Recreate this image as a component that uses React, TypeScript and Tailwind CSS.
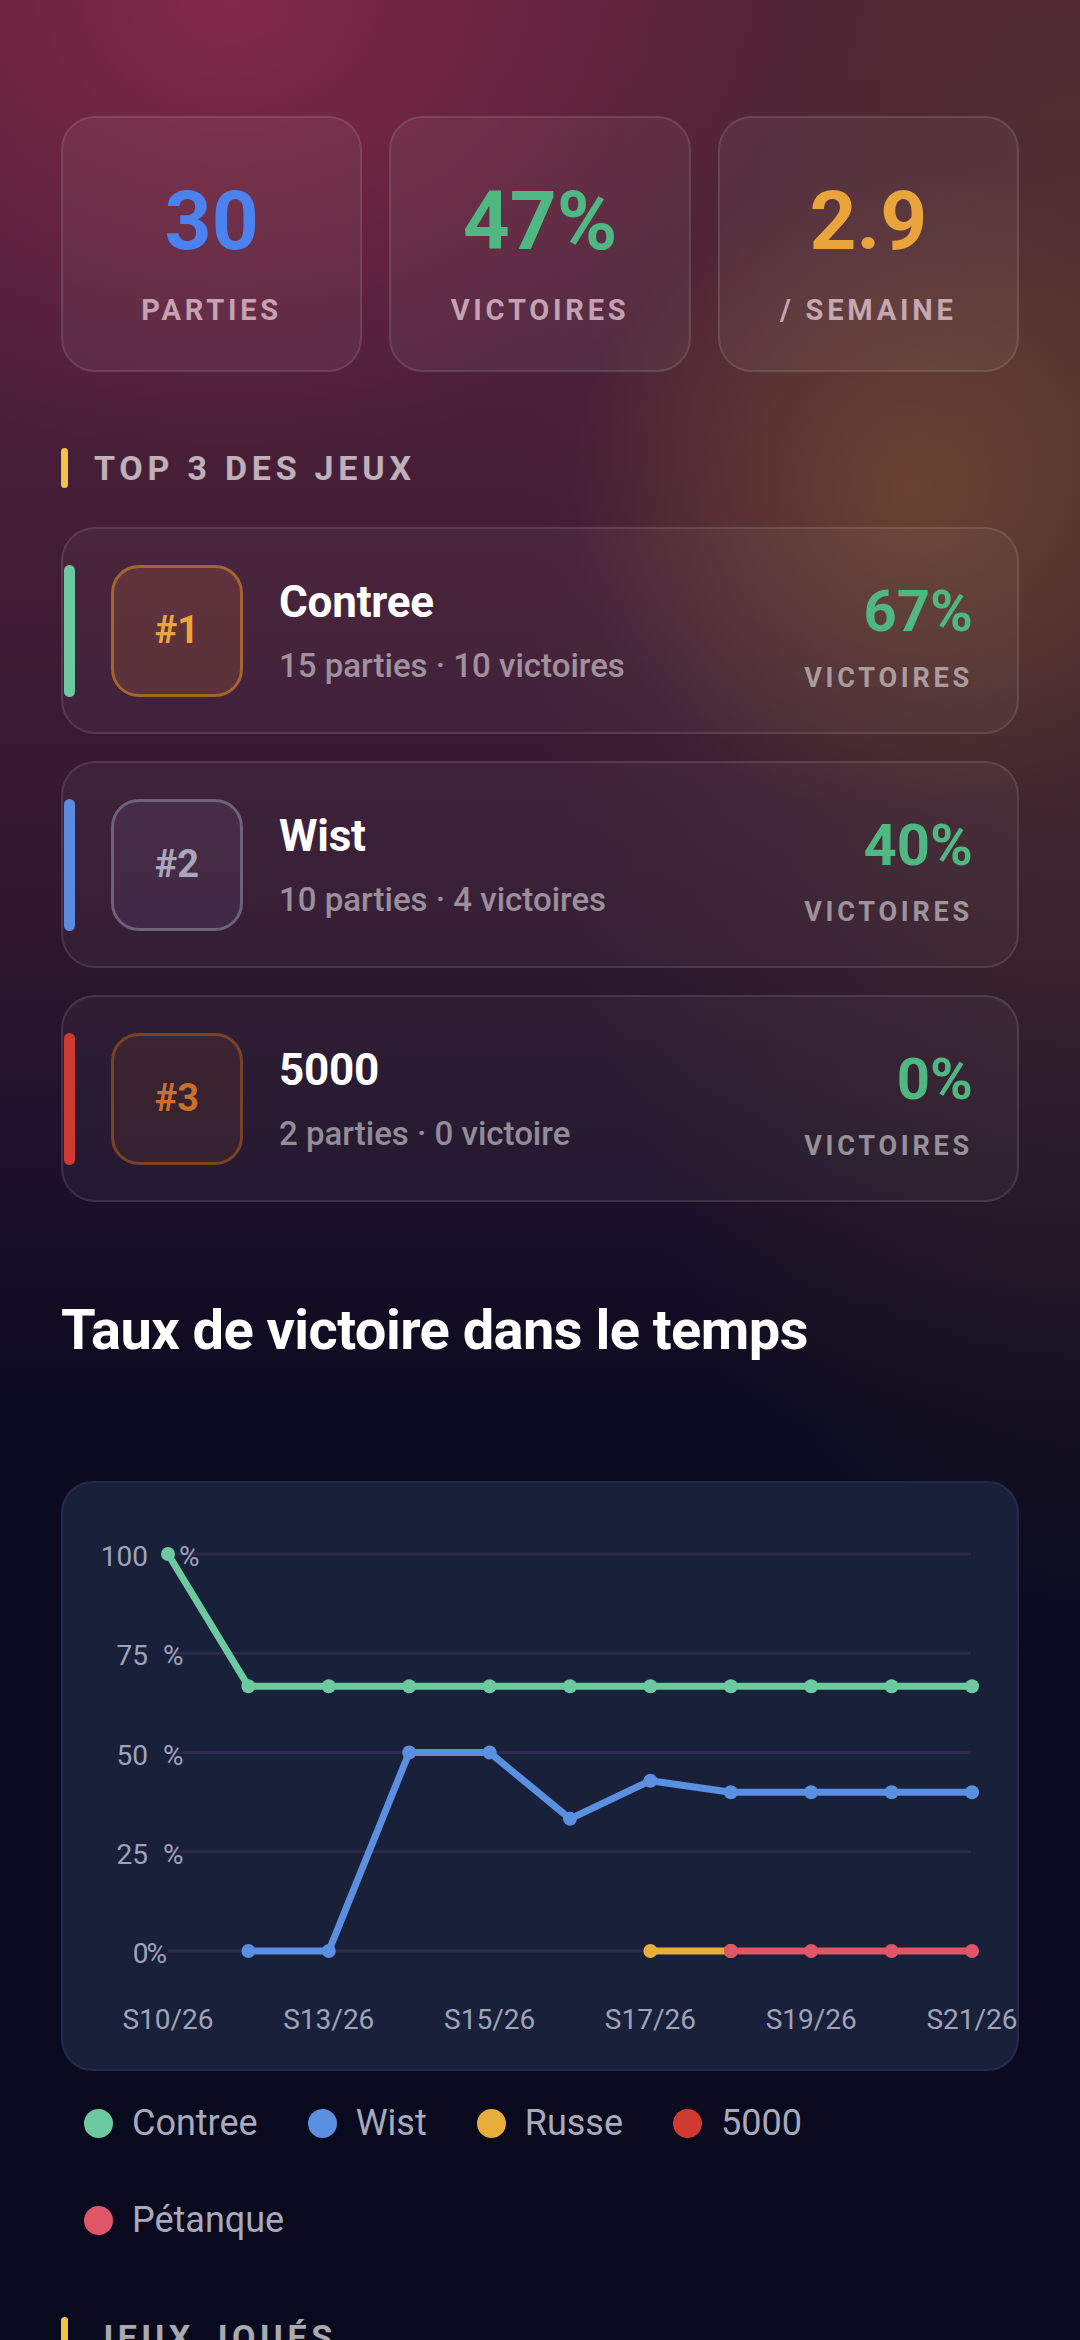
import React from "react";

const stats = [
  { value: "30", label: "PARTIES", color: "text-[#4b82f0]" },
  { value: "47%", label: "VICTOIRES", color: "text-[#4fb882]" },
  { value: "2.9", label: "/ SEMAINE", color: "text-[#e9a53b]" },
];

const top3 = [
  {
    rank: "#1",
    name: "Contree",
    sub: "15 parties · 10 victoires",
    pct: "67%",
    bar: "bg-[#6cc9a0]",
    box: "border-[#a3642f] bg-[#e8903a]/15 text-[#eca53a]",
  },
  {
    rank: "#2",
    name: "Wist",
    sub: "10 parties · 4 victoires",
    pct: "40%",
    bar: "bg-[#5b8be0]",
    box: "border-[#6f6179] bg-[#9a8cc0]/10 text-[#a6a6bd]",
  },
  {
    rank: "#3",
    name: "5000",
    sub: "2 parties · 0 victoire",
    pct: "0%",
    bar: "bg-[#d03a30]",
    box: "border-[#7a4224] bg-[#c0602a]/10 text-[#c8702c]",
  },
];

// chart geometry (relative to the chart card)
const X0 = 107;
const DX = 80.4;
const yOf = (v: number) => 470 - 3.97 * v;
const xOf = (i: number) => X0 + DX * i;

type Serie = { name: string; color: string; pts: [number, number][] };

const series: Serie[] = [
  {
    name: "Wist",
    color: "#5b8fe0",
    pts: [[1, 0], [2, 0], [3, 50], [4, 50], [5, 33.3], [6, 42.9], [7, 40], [8, 40], [9, 40], [10, 40]],
  },
  {
    name: "Contree",
    color: "#6cc9a0",
    pts: [[0, 100], [1, 66.7], [2, 66.7], [3, 66.7], [4, 66.7], [5, 66.7], [6, 66.7], [7, 66.7], [8, 66.7], [9, 66.7], [10, 66.7]],
  },
  { name: "Russe", color: "#e8ad3a", pts: [[6, 0], [7, 0]] },
  { name: "Pétanque", color: "#e05568", pts: [[7, 0], [8, 0], [9, 0], [10, 0]] },
];

const legend = [
  { name: "Contree", color: "bg-[#6cc9a0]" },
  { name: "Wist", color: "bg-[#5b8fe0]" },
  { name: "Russe", color: "bg-[#e8ad3a]" },
  { name: "5000", color: "bg-[#d03a30]" },
  { name: "Pétanque", color: "bg-[#e05568]" },
];

const xLabels = ["S10/26", "S13/26", "S15/26", "S17/26", "S19/26", "S21/26"];

function SectionTitle({ children }: { children: React.ReactNode }) {
  return (
    <div className="flex items-center gap-[26px]">
      <div className="w-[7px] h-[40px] rounded-full bg-[#f2c24a]" />
      <h3 className="text-[34px] leading-[40px] font-bold tracking-[0.14em] text-white/65">{children}</h3>
    </div>
  );
}

function Chart() {
  return (
    <div className="h-[590px] rounded-[32px] border-2 border-[#262a4a] bg-[#18203a] overflow-hidden">
      <svg width="958" height="590" viewBox="0 0 958 590" className="block -m-[2px]">
        {[100, 75, 50, 25, 0].map((v) => (
          <line key={v} x1={X0} x2={910} y1={yOf(v)} y2={yOf(v)} stroke="#2b2a4c" strokeWidth="3" />
        ))}
        <g fill="#a0a3b8" fontSize="28" fontFamily="Roboto, sans-serif">
          <text x="87" y={yOf(100) + 12} textAnchor="end">100</text>
          <text x="118" y={yOf(100) + 12}>%</text>
          {[75, 50, 25].map((v) => (
            <React.Fragment key={v}>
              <text x="87" y={yOf(v) + 12} textAnchor="end">{v}</text>
              <text x="102" y={yOf(v) + 12}>%</text>
            </React.Fragment>
          ))}
          <text x="104" y={yOf(0) + 12} textAnchor="end" letterSpacing="-2">0%</text>
          {xLabels.map((l, k) => (
            <text key={l} x={xOf(k * 2)} y="548" textAnchor="middle">{l}</text>
          ))}
        </g>
        {series.map((s) => (
          <g key={s.name}>
            <polyline
              points={s.pts.map(([i, v]) => `${xOf(i)},${yOf(v)}`).join(" ")}
              fill="none"
              stroke={s.color}
              strokeWidth="7"
              strokeLinejoin="round"
            />
            {s.pts.map(([i, v]) => (
              <circle key={i} cx={xOf(i)} cy={yOf(v)} r="7" fill={s.color} />
            ))}
          </g>
        ))}
      </svg>
    </div>
  );
}

export default function App() {
  return (
    <div
      className="min-h-screen w-full font-['Roboto',sans-serif] bg-[#0a0a1e] bg-[radial-gradient(ellipse_560px_460px_at_230px_0px,rgba(140,44,76,0.8),transparent),radial-gradient(ellipse_340px_330px_at_910px_490px,rgba(125,82,50,0.6),transparent),radial-gradient(ellipse_560px_1300px_at_1080px_380px,rgba(80,58,44,0.6),transparent),linear-gradient(180deg,#521f39_0px,#4a1f38_400px,#331830_850px,#1a1028_1200px,#0b0a1f_1420px,#0a0a1e_2340px)]"
    >
      <div className="px-[61px] pt-[116px] pb-[40px]">
        {/* stats */}
        <div className="grid grid-cols-3 gap-[27px]">
          {stats.map((s) => (
            <div
              key={s.label}
              className="h-[256px] rounded-[34px] border-2 border-white/10 bg-white/[0.05] flex flex-col items-center pt-[62px]"
            >
              <div className={`text-[82px] leading-[82px] font-bold ${s.color}`}>{s.value}</div>
              <div className="mt-[34px] text-[29px] leading-[29px] font-bold tracking-[0.13em] text-[#f5d7e4]/70">
                {s.label}
              </div>
            </div>
          ))}
        </div>

        {/* top 3 */}
        <div className="mt-[76px]">
          <SectionTitle>TOP 3 DES JEUX</SectionTitle>
        </div>
        <div className="mt-[39px] flex flex-col gap-[27px]">
          {top3.map((g) => (
            <div
              key={g.rank}
              className="h-[207px] rounded-[34px] border-2 border-white/10 bg-white/[0.04] flex items-center pr-[44px]"
            >
              <div className={`ml-[1px] w-[11px] h-[132px] rounded-full ${g.bar}`} />
              <div
                className={`ml-[36px] w-[132px] h-[132px] rounded-[28px] border-[3px] flex items-center justify-center text-[38px] font-bold ${g.box}`}
              >
                {g.rank}
              </div>
              <div className="ml-[36px] flex-1 flex flex-col gap-[18px]">
                <div className="text-[44px] leading-[52px] font-bold text-white tracking-[-0.005em]">{g.name}</div>
                <div className="text-[33px] leading-[40px] font-medium text-white/50">{g.sub}</div>
              </div>
              <div className="flex flex-col items-end pt-[14px]">
                <div className="text-[58px] leading-[60px] font-bold text-[#4fb882]">{g.pct}</div>
                <div className="mt-[21px] text-[27px] leading-[32px] font-bold tracking-[0.14em] text-white/50">
                  VICTOIRES
                </div>
              </div>
            </div>
          ))}
        </div>

        {/* chart */}
        <h2 className="mt-[95px] text-[56px] leading-[67px] font-bold text-white tracking-[-0.01em]">
          Taux de victoire dans le temps
        </h2>
        <div className="mt-[117px]">
          <Chart />
        </div>
        <div className="mt-[31px] pl-[23px] pr-[23px] flex flex-wrap gap-x-[50px] gap-y-[55px]">
          {legend.map((l) => (
            <div key={l.name} className="flex items-center gap-[19px]">
              <div className={`w-[29px] h-[29px] rounded-full ${l.color}`} />
              <span className="text-[36px] leading-[42px] text-[#a9a9bc]">{l.name}</span>
            </div>
          ))}
        </div>

        <div className="mt-[76px]">
          <SectionTitle>JEUX JOUÉS</SectionTitle>
        </div>
        <div className="h-[200px]" />
      </div>
    </div>
  );
}
